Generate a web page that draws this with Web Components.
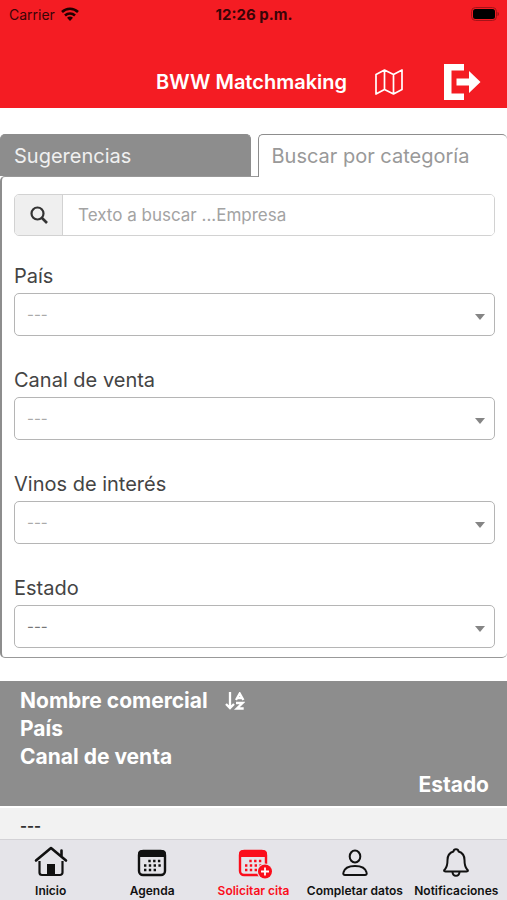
<!DOCTYPE html>
<html lang="es">
<head>
<meta charset="utf-8">
<meta name="viewport" content="width=device-width, initial-scale=1">
<title>BWW Matchmaking</title>
<style>
	body {
		margin: 0;
		height: 100vh;
		display: flex;
		flex-direction: column;
		background: #fff;
		color: #444;
		font-family: Inter, 'Liberation Sans', sans-serif;
		font-size: 21px;
		--red: #f41c23;
		--gray: #8d8d8d;
		--line: #b5b5b5;
	}

	main {
		flex: 1;
		min-height: 0;
		overflow: hidden;
		padding-top: 26px;
	}
</style>
</head>
<body>
	<bww-status-bar carrier="Carrier" time="12:26 p.m."></bww-status-bar>
	<bww-header>BWW Matchmaking</bww-header>

	<main>
		<bww-tabs>
			<span slot="first">Sugerencias</span>
			<span slot="second">Buscar por categoría</span>
			<bww-search placeholder="Texto a buscar ...Empresa"></bww-search>
			<bww-select label="País"></bww-select>
			<bww-select label="Canal de venta"></bww-select>
			<bww-select label="Vinos de interés"></bww-select>
			<bww-select label="Estado" filled></bww-select>
		</bww-tabs>
		<bww-results></bww-results>
	</main>

	<bww-nav>
		<bww-nav-item icon="home">Inicio</bww-nav-item>
		<bww-nav-item icon="calendar">Agenda</bww-nav-item>
		<bww-nav-item icon="calendarPlus" active>Solicitar cita</bww-nav-item>
		<bww-nav-item icon="person">Completar datos</bww-nav-item>
		<bww-nav-item icon="bell">Notificaciones</bww-nav-item>
	</bww-nav>

<script>
const calendar = `
	<rect x="4" y="5" width="26" height="24" rx="4" fill="none" stroke="currentColor" stroke-width="2.4"/>
	<path d="M3 11V8a4 4 0 0 1 4-4h20a4 4 0 0 1 4 4v3z" fill="currentColor"/>
	<path d="M13.3 15h12.500M9 19.5h17M9 24h12.500" fill="none" stroke="currentColor" stroke-width="2.400" stroke-dasharray="2.4 2.4"/>`;

const icons = {
	home: `
		<path d="M5.5 15v11.5a2.5 2.5 0 0 0 2.5 2.5h18a2.5 2.5 0 0 0 2.5-2.5V15" fill="none" stroke="currentColor" stroke-width="2.2"/>
		<path d="M2 14.5 17 2l15 12.5M27.5 10V4.5" fill="none" stroke="currentColor" stroke-width="2.6" stroke-linecap="round" stroke-linejoin="round"/>
		<path d="M13 29V18h8v11z" fill="currentColor"/>`,
	calendar,
	calendarPlus: `${calendar}
		<circle cx="29" cy="25.5" r="8" fill="#e5e4e9"/>
		<circle cx="29" cy="25.5" r="7" fill="currentColor"/>
		<path d="M29 21.5v8M25 25.5h8" stroke="#fff" stroke-width="1.8"/>`,
	person: `
		<g fill="none" stroke="currentColor" stroke-width="2">
			<ellipse cx="17" cy="10.5" rx="5.3" ry="6"/>
			<path d="M7 29c-1.3 0-2-1-1.6-2.4C6.500 22 11 20 17 20s10.500 2 11.6 6.6C29 28 28.3 29 27 29z"/>
		</g>`,
	bell: `
		<g fill="none" stroke="currentColor" stroke-width="2" stroke-linejoin="round">
			<path d="M14.5 5.5C14.8 2.4 19.2 2.4 19.5 5.5c4 1.2 6 4.5 6 8.5 0 5 .7 7.3 2.5 9.200 1.4 1.4 1.3 2.3-.5 2.3h-21c-1.8 0-1.9-.9-.5-2.3C7.8 21.3 8.5 19 8.5 14c0-4 2-7.3 6-8.5z"/>
			<path d="M13.500 26c.3 5 6.700 5 7 0"/>
		</g>`,
};

class StatusBar extends HTMLElement {
	constructor() {
		super();
		this.attachShadow({ mode: 'open' });
		this.shadowRoot.innerHTML = `
			<style>
				:host {
					display: grid;
					grid-template-columns: 1fr auto 1fr;
					align-items: center;
					height: 28px;
					padding: 0 8px 0 9px;
					background: var(--red);
					color: #3a0407;
					font-size: 15px;
				}
				div { display: flex; align-items: center; gap: 6px; font-size: 14px; }
				.battery { justify-self: end; }
				b { font-weight: 700; }
				svg { display: block; }
			</style>
			<div>
				<span>${this.getAttribute('carrier')}</span>
				<svg width="18" height="14" viewBox="0 0 18 14">
					<g fill="none" stroke="#200" stroke-width="2.6">
						<path d="M1 5a11.500 11.500 0 0 1 16 0"/>
						<path d="M4 8.5a7.3 7.3 0 0 1 10 0"/>
					</g>
					<path d="M6 10.8a4.500 4.500 0 0 1 6 0L9 14z" fill="#200"/>
				</svg>
			</div>
			<b>${this.getAttribute('time')}</b>
			<svg class="battery" width="28" height="14" viewBox="0 0 28 14">
				<rect x=".5" y=".5" width="25" height="13" rx="4" fill="none" stroke="#a41318"/>
				<rect x="2" y="2" width="22" height="10" rx="2.5" fill="#000"/>
				<path d="M26.5 5c2 .6 2 3.4 0 4z" fill="#a41318"/>
			</svg>
		`;
	}
}

class Header extends HTMLElement {
	constructor() {
		super();
		this.attachShadow({ mode: 'open' });
		this.shadowRoot.innerHTML = `
			<style>
				:host { display: block; background: var(--red); color: #fff; }
				header {
					display: flex;
					align-items: center;
					justify-content: flex-end;
					height: 52px;
					padding: 28px 26px 0 12px;
				}
				h1 { margin: 0 27px 0 0; font-size: 20px; font-weight: 600; line-height: 28px; }
				button { display: block; padding: 0; border: 0; background: none; color: inherit; }
				.exit { margin-left: 40px; }
				svg { display: block; }
			</style>
			<header>
				<h1><slot></slot></h1>
				<button type="button" aria-label="Mapa">
					<svg width="30" height="28" viewBox="0 0 30 28">
						<path d="M2 6.5 10.5 2 19.5 6.5 28 2v19.5L19.5 26l-9-4.5L2 26zM10.5 2v19.5M19.5 6.5V26" fill="none" stroke="currentColor" stroke-width="1.7" stroke-linejoin="round"/>
					</svg>
				</button>
				<button type="button" class="exit" aria-label="Salir">
					<svg width="37" height="36" viewBox="0 0 37 36" fill="currentColor">
						<path d="M0 0h20v6.500H7.5v23H20V36H0z"/>
						<path d="M12.5 14.500H25V7l11.500 11L25 29v-7.500H12.5z"/>
					</svg>
				</button>
			</header>
		`;
	}
}

class Tabs extends HTMLElement {
	constructor() {
		super();
		this.attachShadow({ mode: 'open' });
		this.shadowRoot.innerHTML = `
			<style>
				:host { display: block; }
				.tabs { display: flex; gap: 7px; }
				button {
					flex: 1;
					box-sizing: border-box;
					height: 42px;
					padding: 0 13px;
					border: 1px solid var(--gray);
					border-bottom: 0;
					border-radius: 5px 5px 0 0;
					background: var(--gray);
					color: #f0f0f0;
					font: inherit;
					font-size: 20px;
					text-align: left;
					white-space: nowrap;
				}
				button[aria-selected='true'] {
					position: relative;
					border-right: 0;
					margin-bottom: -1px;
					height: 43px;
					padding-bottom: 1px;
					background: #fff;
					color: #999;
				}
				.panel {
					padding: 17px 12px 5px;
					border: 1px solid #999;
					border-left: 2px solid var(--gray);
					border-right: 0;
					border-radius: 5px 0 5px 5px;
				}
				.fields { display: flex; flex-direction: column; gap: 28px; }
			</style>
			<div class="tabs" role="tablist">
				<button type="button" role="tab" aria-selected="false"><slot name="first"></slot></button>
				<button type="button" role="tab" aria-selected="true"><slot name="second"></slot></button>
			</div>
			<div class="panel" role="tabpanel">
				<div class="fields"><slot></slot></div>
			</div>
		`;
	}

	connectedCallback() {
		this.shadowRoot.querySelector('.tabs').addEventListener('click', this._handleClick.bind(this));
	}

	_handleClick(event) {
		const picked = event.target.closest('[slot]') || event.target;
		const name = picked.slot;
		this.shadowRoot.querySelectorAll('button').forEach((button) => {
			const isPicked = button === picked || (name && button.firstChild.name === name);
			button.setAttribute('aria-selected', isPicked);
		});
	}
}

class Search extends HTMLElement {
	constructor() {
		super();
		this.attachShadow({ mode: 'open' });
		this.shadowRoot.innerHTML = `
			<style>
				:host { display: block; }
				form {
					display: flex;
					height: 40px;
					border: 1px solid #d2d2d2;
					border-radius: 5px;
					overflow: hidden;
				}
				button {
					display: grid;
					place-items: center;
					width: 48px;
					padding: 0;
					border: 0;
					border-right: 1px solid #d2d2d2;
					background: #efefef;
					color: #333;
				}
				input {
					flex: 1;
					min-width: 0;
					padding: 0 15px;
					border: 0;
					outline: 0;
					background: #fff;
					font: inherit;
					font-size: 17px;
				}
				input::placeholder { color: #a3a3a3; opacity: 1; }
			</style>
			<form>
				<button type="button" aria-label="Buscar">
					<svg width="18" height="18" viewBox="0 0 18 18" fill="none" stroke="currentColor">
						<circle cx="7.500" cy="7.500" r="6" stroke-width="2.2"/>
						<path d="m12 12 5 5" stroke-width="2.6"/>
					</svg>
				</button>
				<input type="text" aria-label="Empresa" placeholder="${this.getAttribute('placeholder')}">
			</form>
		`;
	}
}

class Select extends HTMLElement {
	constructor() {
		super();
		this.attachShadow({ mode: 'open' });
		this.shadowRoot.innerHTML = `
			<style>
				:host { display: block; padding-bottom: 4px; color: #444; font-size: 20px; }
				label { display: block; margin-bottom: 5px; line-height: 24px; }
				.box { display: grid; align-items: center; }
				select, svg { grid-area: 1 / 1; }
				select {
					appearance: none;
					width: 100%;
					height: 43px;
					padding: 0 32px 0 12px;
					border: 1px solid var(--line);
					border-radius: 5px;
					background: #fff;
					color: #aaa;
					font: inherit;
					font-size: 15px;
				}
				:host([filled]) select { color: #777; }
				svg { justify-self: end; margin: 4px 10px 0 0; pointer-events: none; }
			</style>
			<label for="field">${this.getAttribute('label')}</label>
			<div class="box">
				<select id="field"><option>---</option></select>
				<svg width="10" height="6" viewBox="0 0 10 6"><path d="M0 0h10L5 6z" fill="#858585"/></svg>
			</div>
		`;
	}
}

class Results extends HTMLElement {
	constructor() {
		super();
		this.attachShadow({ mode: 'open' });
		this.shadowRoot.innerHTML = `
			<style>
				:host { display: block; margin-top: 23px; }
				table, thead, tbody, tr, th, td { display: block; }
				th, td { padding: 0; text-align: left; font-weight: 700; line-height: 28px; }
				table { font-size: 21px; }
				td { font-size: 15px; }
				thead { padding: 6px 18px 7px 20px; background: var(--gray); color: #fff; }
				th:first-child { display: flex; align-items: center; gap: 17px; }
				th:last-child { text-align: right; }
				tbody { margin-top: 2px; padding: 4px 20px; background: #f2f2f2; color: #333; }
				button { padding: 0; border: 0; background: none; color: inherit; }
				svg { display: block; }
			</style>
			<table>
				<thead>
					<tr>
						<th>Nombre comercial
							<button type="button" aria-label="Ordenar">
								<svg width="20" height="18" viewBox="0 0 20 18" fill="none" stroke="currentColor" stroke-width="2.3">
									<path d="M5 0v16M1 12l4 4 4-4"/>
									<path d="M11 8l3.700-6.500L18.400 8M12.500 6h4.400M11 11h6.500L11.8 16.500h6.900"/>
								</svg>
							</button>
						</th>
						<th>País</th>
						<th>Canal de venta</th>
						<th>Estado</th>
					</tr>
				</thead>
				<tbody>
					<tr><td>---</td></tr>
				</tbody>
			</table>
		`;
	}
}

class Nav extends HTMLElement {
	constructor() {
		super();
		this.attachShadow({ mode: 'open' });
		this.shadowRoot.innerHTML = `
			<style>
				:host { display: block; background: #e5e4e9; border-top: 1px solid #d3d2d6; }
				nav { display: grid; grid-template-columns: repeat(5, 1fr); height: 60px; }
			</style>
			<nav><slot></slot></nav>
		`;
	}
}

class NavItem extends HTMLElement {
	constructor() {
		super();
		this.attachShadow({ mode: 'open' });
		this.shadowRoot.innerHTML = `
			<style>
				:host { display: block; color: #111; font-size: 12px; font-weight: 600; }
				:host([active]) { color: #fb0d1b; }
				a {
					display: flex;
					flex-direction: column;
					align-items: center;
					gap: 5px;
					padding-top: 6px;
					color: inherit;
					line-height: 16px;
					text-decoration: none;
					white-space: nowrap;
				}
				svg { display: block; overflow: visible; }
			</style>
			<a href="#">
				<svg width="34" height="32" viewBox="0 0 34 32">${icons[this.getAttribute('icon')]}</svg>
				<span><slot></slot></span>
			</a>
		`;
	}
}

customElements.define('bww-status-bar', StatusBar);
customElements.define('bww-header', Header);
customElements.define('bww-tabs', Tabs);
customElements.define('bww-search', Search);
customElements.define('bww-select', Select);
customElements.define('bww-results', Results);
customElements.define('bww-nav', Nav);
customElements.define('bww-nav-item', NavItem);
</script>
</body>
</html>
